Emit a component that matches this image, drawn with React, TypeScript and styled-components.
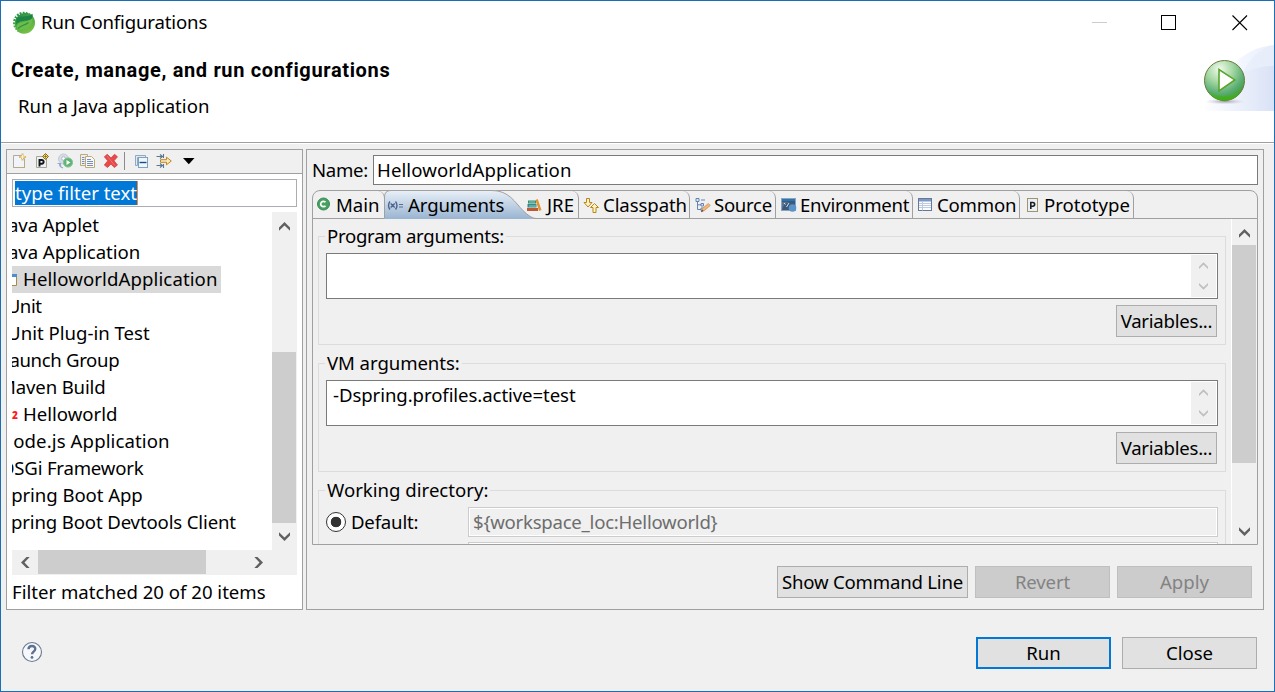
import React from "react";
import styled, { createGlobalStyle, css } from "styled-components";

const Global = createGlobalStyle`
  * { box-sizing: border-box; }
  body { margin: 0; background: #f0f0f0; }
  svg { display: block; flex: none; }
`;

const Window = styled.div`
  width: 1275px;
  height: 692px;
  display: flex;
  flex-direction: column;
  border: 1px solid #1a6fb5;
  background: #f0f0f0;
  color: #000;
  font-family: "Noto Sans", "Open Sans", sans-serif;
  font-size: 18.6px;
  line-height: 27px;
  white-space: nowrap;
  overflow: hidden;
`;

const Text = styled.span<{ $ls?: number }>`
  letter-spacing: ${(p) => p.$ls ?? 0}px;
`;

const Header = styled.header`
  height: 143px;
  flex: none;
  display: flex;
  flex-direction: column;
  background: #fff;
  border-bottom: 1px solid #fff;
  box-shadow: inset 0 -1px #a0a0a0;
`;

const TitleBar = styled.div`
  height: 42px;
  display: flex;
  align-items: center;
  padding: 0 26px 0 10px;
  gap: 5px;
`;

const Title = styled(Text)`
  padding-bottom: 2px;
`;

const WindowControls = styled.div`
  display: flex;
  gap: 55px;
  margin-left: auto;
  padding-top: 2px;
`;

const Banner = styled.div`
  height: 100px;
  display: flex;
  justify-content: space-between;
`;

const BannerText = styled.div`
  display: flex;
  flex-direction: column;
  padding: 13px 0 0 10px;
`;

const Heading = styled.h1`
  margin: 0;
  font: 700 20px/28px Roboto, "Liberation Sans", sans-serif;
  letter-spacing: 0.65px;
`;

const Subheading = styled.p`
  margin: 8px 0 0 7px;
`;

const Body = styled.main`
  display: flex;
  gap: 3px;
  padding: 5px 10px 0 5px;
  height: 467px;
`;

const SidePanel = styled.section`
  width: 297px;
  height: 461px;
  display: flex;
  flex-direction: column;
  border: 1px solid #a0a0a0;
  background: #fff;
  flex: none;
`;

const Toolbar = styled.div`
  height: 24px;
  flex: none;
  display: flex;
  align-items: center;
  padding: 0 0 1px 4px;
  gap: 7px;
  background: #f0f0f0;
  border-bottom: 1px solid #a0a0a0;
  & > svg:last-child {
    margin-left: 4px;
  }
`;

const ToolbarRule = styled.div`
  width: 1px;
  height: 18px;
  margin: 0 1px 0 -2px;
  background: #8c8c8c;
`;

const FilterBox = styled.div`
  width: 285px;
  height: 28px;
  margin: 5px 0 5px 5px;
  padding: 1px 2px;
  border: 1px solid #abadb3;
  flex: none;
`;

const Selection = styled.span`
  display: block;
  width: 123px;
  height: 24px;
  line-height: 24px;
  background: #0078d7;
  border-right: 1px solid #ff8728;
  color: #fff;
`;

const TreeArea = styled.div`
  display: grid;
  grid-template: 338px 25px / 260px 25px;
  margin-left: 5px;
  background: #f0f0f0;
  width: 285px;
`;

const TreeList = styled.ul`
  margin: 0;
  padding: 0;
  list-style: none;
  background: #fff;
  overflow: hidden;
`;

const TreeItem = styled.li<{ $selected?: boolean; $shift: number }>`
  display: flex;
  align-items: center;
  width: max-content;
  height: 27px;
  ${(p) =>
    p.$selected &&
    css`
      background: #d9d9d9;
      width: 209px;
    `}
  & > span {
    margin-left: ${(p) => p.$shift}px;
    padding-bottom: 2px;
  }
`;

const TreeMark = styled.i`
  width: 6px;
  overflow: hidden;
  color: #ff1a1a;
  font: 900 10px/12px "Noto Sans", sans-serif;
`;

const ScrollBar = styled.div<{ $horizontal?: boolean }>`
  display: flex;
  flex-direction: ${(p) => (p.$horizontal ? "row" : "column")};
  background: #f0f0f0;
`;

const ScrollArrow = styled.div<{ $w?: number; $h?: number; $top?: number }>`
  width: ${(p) => p.$w ?? 25}px;
  height: ${(p) => p.$h ?? 25}px;
  padding-top: ${(p) => p.$top ?? 0}px;
  display: grid;
  place-items: center;
  flex: none;
`;

const Thumb = styled.div<{ $w: number; $h: number; $before?: number; $after?: number; $horizontal?: boolean }>`
  width: ${(p) => p.$w}px;
  height: ${(p) => p.$h}px;
  margin: ${(p) =>
    p.$horizontal ? `0 ${p.$after ?? 0}px 0 ${p.$before ?? 0}px` : `${p.$before ?? 0}px 0 ${p.$after ?? 0}px`};
  background: #cdcdcd;
  flex: none;
`;

const Status = styled.div`
  padding: 3px 0 0 5px;
`;

const EditorPanel = styled.section`
  width: 958px;
  height: 461px;
  padding: 5px;
  border: 1px solid #a0a0a0;
  display: flex;
  flex-direction: column;
`;

const NameRow = styled.div`
  display: flex;
  align-items: center;
  height: 30px;
  flex: none;
`;

const NameLabel = styled.label`
  width: 61px;
  padding-bottom: 2px;
  letter-spacing: -0.3px;
`;

const NameField = styled.div`
  width: 885px;
  height: 30px;
  padding-left: 3px;
  border: 1px solid #7a7a7a;
  background: #fff;
  letter-spacing: 0.1px;
`;

const TabFolder = styled.div`
  width: 946px;
  height: 355px;
  margin-top: 5px;
  flex: none;
  border: 1px solid #a0a0a0;
  border-radius: 8px 8px 0 0;
`;

const TabStrip = styled.div`
  display: flex;
  height: 28px;
  border-bottom: 1px solid #a0a0a0;
`;

const Tab = styled.div<{ $w: number; $icon: number; $active?: boolean }>`
  position: relative;
  width: ${(p) => p.$w}px;
  height: 27px;
  display: flex;
  align-items: center;
  border-right: ${(p) => (p.$active ? "none" : "1px solid #a0a0a0")};
  border-top-right-radius: 7px;
  flex: none;
  & > svg:not([data-shape]) {
    position: relative;
    width: 16px;
    margin-left: ${(p) => p.$icon}px;
  }
  & > span {
    position: relative;
    padding-bottom: 1px;
  }
`;

const ActiveShape = styled.svg`
  position: absolute;
  left: -1px;
  top: -1px;
`;

const TabPage = styled.div`
  display: flex;
  height: 325px;
  overflow: hidden;
`;

const Groups = styled.div`
  width: 918px;
  padding: 17px 0 0 5px;
  flex: none;
`;

const PageScroll = styled(ScrollBar)`
  width: 26px;
  border-left: 1px solid #fff;
  flex: none;
`;

const Group = styled.fieldset`
  display: flex;
  flex-direction: column;
  width: 908px;
  height: 109px;
  margin: 0 0 18px;
  padding: 0 7px;
  border: 1px solid #dcdcdc;
`;

const GroupLabel = styled.div<{ $ls?: number }>`
  width: max-content;
  height: 26px;
  margin: -15px 0 5px -1px;
  padding: 0 2px;
  background: #f0f0f0;
  letter-spacing: ${(p) => p.$ls ?? 0}px;
  flex: none;
`;

const TextArea = styled.div`
  display: flex;
  justify-content: space-between;
  height: 46px;
  width: 892px;
  padding: 1px 1px 1px 6px;
  border: 1px solid #7a7a7a;
  background: #fff;
  line-height: 25px;
  flex: none;
`;

const MiniScroll = styled(ScrollBar)`
  width: 25px;
  height: 42px;
`;

const Button = styled.button<{ $w: number; $ls?: number; $kind?: "default" | "disabled" }>`
  width: ${(p) => p.$w}px;
  height: 32px;
  padding: 0;
  border: 1px solid #adadad;
  background: #e1e1e1;
  color: #000;
  font: inherit;
  line-height: 28px;
  letter-spacing: ${(p) => p.$ls ?? 0}px;
  white-space: nowrap;
  flex: none;
  ${(p) => p.$kind === "default" && "border: 2px solid #0078d7;"}
  ${(p) => p.$kind === "disabled" && "border-color: #bfbfbf; background: #cccccc; color: #838383;"}
`;

const GroupAction = styled.div`
  display: flex;
  justify-content: flex-end;
  padding: 6px 1px 0 0;
`;

const DefaultRow = styled.div`
  display: flex;
  align-items: center;
  height: 30px;
  flex: none;
`;

const Radio = styled.span`
  width: 20px;
  height: 20px;
  margin-right: 5px;
  border: 1px solid #333;
  border-radius: 50%;
  background: radial-gradient(circle, #333 0 5px, #fff 5.6px);
`;

const RadioLabel = styled.label`
  width: 117px;
  padding-bottom: 2px;
  letter-spacing: -0.2px;
`;

const LockedField = styled.div`
  width: 750px;
  height: 30px;
  padding-left: 4px;
  border: 1px solid #ccc;
  box-shadow: inset 0 0 0 1px #fff;
  line-height: 28px;
  letter-spacing: -0.25px;
  color: #6d6d6d;
  flex: none;
`;

const NextField = styled(LockedField)`
  margin: 5px 0 0 142px;
`;

const Actions = styled.div`
  display: flex;
  justify-content: flex-end;
  gap: 7px;
  padding: 21px 6px 0 0;
`;

const Footer = styled.footer`
  display: flex;
  align-items: center;
  gap: 11px;
  padding: 26px 17px 0 20px;
  & > svg {
    margin: -2px auto 0 0;
  }
`;

const rotations = { up: 0, right: 90, down: 180, left: 270 };

const Chevron = ({ dir, color = "#606060", small }: { dir: keyof typeof rotations; color?: string; small?: boolean }) => (
  <svg width={small ? 9 : 11} height={small ? 9 : 11} viewBox="0 0 11 11">
    <path
      d={small ? "M0 7 5.500 1.500 11 7v2.800L5.500 4.500 0 9.800Z" : "M0 6.500 5.500 1 11 6.500V9.700L5.500 4.500 0 9.700Z"}
      fill={color}
      transform={`rotate(${rotations[dir]} 5.5 5.5)`}
    />
  </svg>
);

const SpringIcon = () => (
  <svg width="25" height="25" viewBox="0 0 25 25">
    <defs>
      <linearGradient id="spring" x1="0.2" y1="0" x2="0.7" y2="1">
        <stop offset="0" stopColor="#1f8c4a" />
        <stop offset="0.5" stopColor="#4faa44" />
        <stop offset="1" stopColor="#7cc444" />
      </linearGradient>
    </defs>
    <circle cx="13" cy="12.800" r="11" fill="url(#spring)" />
    <path d="M8 23.500A11.800 11.800 0 0 1 20.500 3.500" fill="none" stroke="#fff" strokeWidth="2" strokeDasharray="1.300 1.900" />
    <path d="M5.500 9C8 4.500 15 8.500 21.500 3.800 22.500 8 20 10.500 15 10.800 10.500 11 7 11.500 5 15Z" fill="#1d8446" />
    <path d="M5.800 16.500C7 10.500 15 13 21.500 8.500c.5 7-5 11.500-12 11.200-2 0-3.500-1-3.700-3.200Z" fill="#6dbd4a" />
    <path d="M7 18.500c3-3.500 7-3 10.500-6" fill="none" stroke="#2f9547" strokeWidth="1.200" />
  </svg>
);

const RunArt = () => (
  <svg width="74" height="72" viewBox="0 1 74 72">
    <defs>
      <linearGradient id="wash" x1="0" x2="1">
        <stop offset="0" stopColor="#fff" />
        <stop offset="1" stopColor="#d9e2f6" />
      </linearGradient>
      <linearGradient id="washTop" x1="0" x2="1">
        <stop offset="0.3" stopColor="#f8faff" />
        <stop offset="1" stopColor="#e8eefb" />
      </linearGradient>
      <radialGradient id="ball" cx="0.38" cy="0.22" r="0.8">
        <stop offset="0" stopColor="#f1faed" />
        <stop offset="0.4" stopColor="#a7d8a4" />
        <stop offset="0.75" stopColor="#5bae74" />
        <stop offset="1" stopColor="#3f9b30" />
      </radialGradient>
      <linearGradient id="rim" x1="0" x2="0" y1="0" y2="1">
        <stop offset="0.3" stopColor="#46b820" stopOpacity="0" />
        <stop offset="1" stopColor="#3fae12" />
      </linearGradient>
      <radialGradient id="shade">
        <stop offset="0" stopColor="#9d9aa5" />
        <stop offset="1" stopColor="#d0d0e0" stopOpacity="0" />
      </radialGradient>
    </defs>
    <path d="M34 21C48 9 60 4 74 3v66H8Z" fill="url(#washTop)" />
    <path d="M42 32C50 16 61 6 74 3v32Z" fill="#e6edfa" opacity=".7" />
    <path d="M2 69C16 40 48 24 74 24v45Z" fill="url(#wash)" />
    <ellipse cx="25" cy="59.500" rx="20" ry="3" fill="url(#shade)" />
    <circle cx="24.500" cy="38.500" r="20" fill="url(#ball)" stroke="#687b3c" strokeWidth="1" />
    <path d="M5.300 43a19.600 19.600 0 0 0 38.400 0C40 51 31 54 24 54S9 51 5.300 43Z" fill="url(#rim)" />
    <path d="M19 27.500v21.500l15.800-11.100Z" fill="#fff" stroke="#59a52d" strokeWidth="1.600" />
  </svg>
);

const icon = { width: 16, height: 16, viewBox: "0 0 16 16" };

const NewIcon = () => (
  <svg {...icon}>
    <path d="M2.500 2.500h8v3h3v9h-11Z" fill="#f1f4fa" stroke="#a9aba9" />
    <path d="M2.500 14.500h11V7" fill="none" stroke="#bda979" />
    <path d="M11.500.5v7M8 4h7" stroke="#dcb965" strokeWidth="2" />
    <path d="M11.500 2v4M9.500 4h4" stroke="#fff4c2" />
  </svg>
);
const PrototypeNewIcon = () => (
  <svg {...icon}>
    <path d="M2.500 3.500h10v11h-10Z" fill="#e9f1fa" stroke="#a9a58e" />
    <path d="M5.500 13.500V7h2.300a1.700 1.700 0 0 1 0 3.700H5.500" fill="none" stroke="#161616" strokeWidth="1.900" />
    <path d="m11.500.5 3 3-3 3-3-3Z" fill="#f9e28c" stroke="#8c6c10" />
    <path d="M11.500 1.500v4M9.500 3.500h4" stroke="#8c6c10" strokeWidth=".8" />
  </svg>
);
const ExportIcon = () => (
  <svg {...icon}>
    <circle cx="6.500" cy="6" r="5" fill="#d7dce6" stroke="#c3cad6" />
    <circle cx="6.500" cy="5.500" r="1.800" fill="#fff" stroke="#b1bac7" />
    <circle cx="11" cy="9.500" r="4.600" fill="#5fb475" stroke="#86c394" />
    <path d="M9.500 7v5l4-2.500Z" fill="#fff" />
    <path d="M.5 10.500h3v3M3.500 10.500C1.500 12 3 14 6 15" fill="none" stroke="#8fa9cf" strokeWidth="1.200" />
  </svg>
);
const CopyIcon = () => (
  <svg {...icon}>
    <path d="M.5 1.500h7v11h-7Z" fill="#eaf0f9" stroke="#c0a972" />
    <path d="M5.500 3.500h6l3 3v8h-9Z" fill="#f6f8fc" stroke="#c0a972" />
    <path d="M7 6.500h4M7 8.500h6M7 10.500h6M7 12.500h6M2 4.500h2.500M2 6.500h2.500M2 8.500h2.500M2 10.500h2.500" stroke="#7a8fb5" />
  </svg>
);
const DeleteIcon = () => (
  <svg {...icon}>
    <path d="M1.300 3.800 4.300 1.300 8 5l3.500-3.700L14.500 3.800 11 7.800 14.500 12l-3.200 2.500L8 11l-3.500 3.500L1.300 12l3.500-4.200Z" fill="#e84a4a" stroke="#d1444a" strokeWidth=".8" />
    <path d="m4 3 7.800 9.500" stroke="#f07b7b" strokeWidth=".8" />
  </svg>
);
const CollapseIcon = () => (
  <svg {...icon}>
    <path d="M2.500 12.500v-10h10v2h-8v8Z" fill="#dcebf6" stroke="#8fa9c2" />
    <rect x="5.500" y="4.500" width="9" height="10" fill="#eff7fe" stroke="#7fa1bf" />
    <path d="M6.500 9.500h7" stroke="#1c4a85" strokeWidth="1.400" />
  </svg>
);
const FilterIcon = () => (
  <svg {...icon}>
    <path d="M.5 3.500H7M4 1.500l2.500 2-2.500 2M.5 12.500H7M4 10.500l2.500 2-2.500 2M7.500 1v4M7.500 11v4" fill="none" stroke="#587890" strokeWidth="1.100" />
    <path d="M4.500 6.700h6V4.200L15.300 8l-4.800 3.800V9.300h-6Z" fill="#fbe9b8" stroke="#c08522" />
  </svg>
);
const MenuArrow = () => (
  <svg width="12" height="8" viewBox="0 0 12 8">
    <path d="M0 1h11.500L5.800 7.200Z" fill="#000" />
  </svg>
);

const MainIcon = () => (
  <svg {...icon}>
    <circle cx="8.500" cy="7" r="6" fill="#46a060" stroke="#3b8a58" />
    <path d="M10.500 5.300a2.700 2.700 0 1 0 0 3.400" fill="none" stroke="#fff" strokeWidth="1.700" />
  </svg>
);
const ArgumentsIcon = () => (
  <svg {...icon}>
    <path d="M3 4.500q-3 4 0 8M8.500 4.500q3 4 0 8M3.700 6.500l4 4M7.700 6.500l-4 4" fill="none" stroke="#4f6490" strokeWidth="1.400" />
    <path d="M12 7.500h4M12 10h4" stroke="#5a6f92" strokeWidth="1.100" />
  </svg>
);
const JreIcon = () => (
  <svg {...icon}>
    <path d="M2 3.500h8v3H2Z" fill="#2f8e76" />
    <path d="M1.500 7h9v3.500h-9Z" fill="#328a8d" />
    <path d="M1 11h11v3H1Z" fill="#bc5a35" />
    <path d="M3 5h6M3 9h7" stroke="#91cbb8" />
    <path d="m9.500 3 2.200-1L15.500 13l-2.500 1Z" fill="#e3942f" />
  </svg>
);
const ClasspathIcon = () => (
  <svg {...icon}>
    <path d="M3.500 1.500h3v4H9L5 10 1 5.500h2.500Z" fill="#fff3c7" stroke="#b98718" />
    <path d="M10 15.500h3v-5h2.500L11.500 6.500l-4 4H10Z" fill="#fff3c7" stroke="#b98718" />
  </svg>
);
const SourceIcon = () => (
  <svg {...icon}>
    <path d="M1 1.500h3v3H1ZM6 6.500h2.500v2.500H6ZM6 11h2.500v2.500H6Z" fill="#dce7f7" stroke="#6583b5" />
    <path d="M2.500 5v7.500H6M2.500 7.800H6M6 3h4" fill="none" stroke="#6583b5" />
    <path d="m6.500 14.500.8-3 6-5 2 2-6 5.200Z" fill="#efb57c" stroke="#c58a58" strokeWidth=".7" />
    <path d="m6 15.200 1-2.700 1.500 1.500Z" fill="#4d4b48" />
  </svg>
);
const EnvironmentIcon = () => (
  <svg {...icon}>
    <rect x=".5" y="1.500" width="14" height="12" fill="#3d5878" stroke="#8aa3bf" />
    <path d="M1 2h13v2H1Z" fill="#2a76b5" />
    <path d="M1 13q1-6 7-8H1Z" fill="#5c738f" />
    <path d="m5.500 10 2.500-4M3 6l1.500 1.500" stroke="#d5e1ea" />
    <circle cx="11.500" cy="11" r="3.800" fill="#5a93c9" />
  </svg>
);
const CommonIcon = () => (
  <svg {...icon}>
    <rect x="1.500" y="1.500" width="13" height="12" fill="#fafcff" stroke="#64789b" />
    <path d="M2 2h12v2.500H2Z" fill="#8098bf" />
    <path d="M2 6.500h12M2 8.500h12M2 10.500h12M5.500 4.500v9" stroke="#bccbe0" />
  </svg>
);
const PrototypeIcon = () => (
  <svg {...icon}>
    <rect x="3.500" y="1.500" width="10" height="13" fill="#e6effa" stroke="#a6926a" />
    <path d="M6.800 12V5.500h2a1.700 1.700 0 0 1 0 3.700h-2" fill="none" stroke="#1c1c1c" strokeWidth="1.600" />
  </svg>
);
const HelpIcon = () => (
  <svg width="22" height="22" viewBox="0 0 22 22">
    <circle cx="11" cy="11" r="9.500" fill="#f6f8fc" stroke="#6a7890" strokeWidth="1.100" />
    <path d="M7.500 8.300C7.600 3.800 14.400 4 14.300 8c-.1 2.600-3.300 2.600-3.300 5.200" fill="none" stroke="#5d6f94" strokeWidth="2.400" />
    <circle cx="11" cy="16.400" r="1.400" fill="#5d6f94" />
  </svg>
);

const treeItems: { text: string; shift: number; ls?: number; mark?: "app" | "maven" }[] = [
  { text: "Java Applet", shift: -9, ls: -0.1 },
  { text: "Java Application", shift: -9, ls: -0.07 },
  { text: "HelloworldApplication", shift: 5, ls: 0.1, mark: "app" },
  { text: "JUnit", shift: -10, ls: -0.4 },
  { text: "JUnit Plug-in Test", shift: -10 },
  { text: "Launch Group", shift: -12, ls: -0.35 },
  { text: "Maven Build", shift: -13, ls: -0.15 },
  { text: "Helloworld", shift: 5, mark: "maven" },
  { text: "Node.js Application", shift: -13, ls: 0.1 },
  { text: "OSGi Framework", shift: -12, ls: -0.2 },
  { text: "Spring Boot App", shift: -11, ls: -0.07 },
  { text: "Spring Boot Devtools Client", shift: -11, ls: -0.15 },
];

const tabs: { text: string; w: number; icon: number; gap: number; Icon: React.FC; active?: boolean; ls?: number }[] = [
  { text: "Main", w: 72, icon: 2, gap: 5, Icon: MainIcon },
  { text: "Arguments", w: 136, icon: 2, gap: 5, Icon: ArgumentsIcon, active: true, ls: -0.12 },
  { text: "JRE", w: 58, icon: 5, gap: 5, Icon: JreIcon },
  { text: "Classpath", w: 111, icon: 4, gap: 4, Icon: ClasspathIcon, ls: -0.1 },
  { text: "Source", w: 86, icon: 5, gap: 3, Icon: SourceIcon, ls: -0.3 },
  { text: "Environment", w: 137, icon: 5, gap: 3, Icon: EnvironmentIcon, ls: -0.27 },
  { text: "Common", w: 107, icon: 4, gap: 4, Icon: CommonIcon, ls: -0.2 },
  { text: "Prototype", w: 114, icon: 4, gap: 4, Icon: PrototypeIcon },
];

const TabLabel = styled(Text)<{ $gap: number }>`
  margin-left: ${(p) => p.$gap}px;
`;

const ActiveTabShape = () => (
  <ActiveShape data-shape width="152" height="29" viewBox="0 0 152 29">
    <defs>
      <linearGradient id="tab" x1="0" x2="0" y1="0" y2="1">
        <stop offset="0" stopColor="#e9f0f8" />
        <stop offset="1" stopColor="#99b4d1" />
      </linearGradient>
    </defs>
    <path d="M0 29V7Q0 .5 7 .5h101c17 0 23 12 31 20q8 8 13 8V29Z" fill="url(#tab)" />
    <path d="M.5 28V7Q.5 .5 7 .5h101c17 0 23 12 31 20q8 8 13 8" fill="none" stroke="#a0a0a0" />
  </ActiveShape>
);

const ArgumentGroup = ({ label, ls, value }: { label: string; ls?: number; value?: string }) => (
  <Group>
    <GroupLabel $ls={ls}>{label}</GroupLabel>
    <TextArea>
      <Text $ls={-0.08}>{value}</Text>
      <MiniScroll>
        <ScrollArrow $h={21}><Chevron dir="up" color="#bfbfbf" small /></ScrollArrow>
        <ScrollArrow $h={21}><Chevron dir="down" color="#bfbfbf" small /></ScrollArrow>
      </MiniScroll>
    </TextArea>
    <GroupAction>
      <Button $w={101} $ls={-0.25}>Variables...</Button>
    </GroupAction>
  </Group>
);

export default function App() {
  return (
    <Window>
      <Global />
      <Header>
        <TitleBar>
          <SpringIcon />
          <Title $ls={-0.15}>Run Configurations</Title>
          <WindowControls>
            <svg width="16" height="16" overflow="visible"><path d="M2 7.500h15" stroke="#ccc" /></svg>
            <svg width="16" height="16"><rect x=".5" y=".5" width="14" height="14" fill="none" stroke="#000" /></svg>
            <svg width="16" height="16"><path d="M.5 .5 15 15M15 .5 .5 15" stroke="#000" strokeWidth="1.100" /></svg>
          </WindowControls>
        </TitleBar>
        <Banner>
          <BannerText>
            <Heading>Create, manage, and run configurations</Heading>
            <Subheading>Run a Java application</Subheading>
          </BannerText>
          <RunArt />
        </Banner>
      </Header>
      <Body>
        <SidePanel>
          <Toolbar>
            <NewIcon />
            <PrototypeNewIcon />
            <ExportIcon />
            <CopyIcon />
            <DeleteIcon />
            <ToolbarRule />
            <CollapseIcon />
            <FilterIcon />
            <MenuArrow />
          </Toolbar>
          <FilterBox><Selection>type filter text</Selection></FilterBox>
          <TreeArea>
            <TreeList>
              {treeItems.map((item) => (
                <TreeItem key={item.text} $shift={item.shift} $selected={item.mark === "app"}>
                  {item.mark === "app" && (
                    <svg width="6" height="14"><path d="M0 1.500h4.500v11H0" fill="#fff" stroke="#a78c49" /><path d="M0 1h5v3H0Z" fill="#4b8fd0" /></svg>
                  )}
                  {item.mark === "maven" && <TreeMark>2</TreeMark>}
                  <Text $ls={item.ls}>{item.text}</Text>
                </TreeItem>
              ))}
            </TreeList>
            <ScrollBar>
              <ScrollArrow $h={29}><Chevron dir="up" /></ScrollArrow>
              <Thumb $w={24} $h={171} $before={111} />
              <ScrollArrow $h={27}><Chevron dir="down" /></ScrollArrow>
            </ScrollBar>
            <ScrollBar $horizontal>
              <ScrollArrow $w={26}><Chevron dir="left" /></ScrollArrow>
              <Thumb $w={168} $h={24} $after={39} $horizontal />
              <ScrollArrow $w={26}><Chevron dir="right" /></ScrollArrow>
            </ScrollBar>
          </TreeArea>
          <Status>Filter matched 20 of 20 items</Status>
        </SidePanel>
        <EditorPanel>
          <NameRow>
            <NameLabel>Name:</NameLabel>
            <NameField>HelloworldApplication</NameField>
          </NameRow>
          <TabFolder>
            <TabStrip>
              {tabs.map(({ text, w, icon: iconGap, gap, Icon, active, ls }) => (
                <Tab key={text} $w={w} $icon={iconGap} $active={active}>
                  {active && <ActiveTabShape />}
                  <Icon />
                  <TabLabel $gap={gap} $ls={ls}>{text}</TabLabel>
                </Tab>
              ))}
            </TabStrip>
            <TabPage>
              <Groups>
                <ArgumentGroup label="Program arguments:" ls={-0.28} />
                <ArgumentGroup label="VM arguments:" ls={-0.08} value="-Dspring.profiles.active=test" />
                <Group>
                  <GroupLabel>Working directory:</GroupLabel>
                  <DefaultRow>
                    <Radio />
                    <RadioLabel>Default:</RadioLabel>
                    <LockedField>{"${workspace_loc:Helloworld}"}</LockedField>
                  </DefaultRow>
                  <NextField />
                </Group>
              </Groups>
              <PageScroll>
                <ScrollArrow $h={26} $top={3}><Chevron dir="up" /></ScrollArrow>
                <Thumb $w={24} $h={218} $after={55} />
                <ScrollArrow $h={26}><Chevron dir="down" /></ScrollArrow>
              </PageScroll>
            </TabPage>
          </TabFolder>
          <Actions>
            <Button $w={191} $ls={-0.2}>Show Command Line</Button>
            <Button $w={135} $kind="disabled" $ls={-0.15}>Revert</Button>
            <Button $w={135} $kind="disabled">Apply</Button>
          </Actions>
        </EditorPanel>
      </Body>
      <Footer>
        <HelpIcon />
        <Button $w={135} $kind="default">Run</Button>
        <Button $w={135}>Close</Button>
      </Footer>
    </Window>
  );
}
